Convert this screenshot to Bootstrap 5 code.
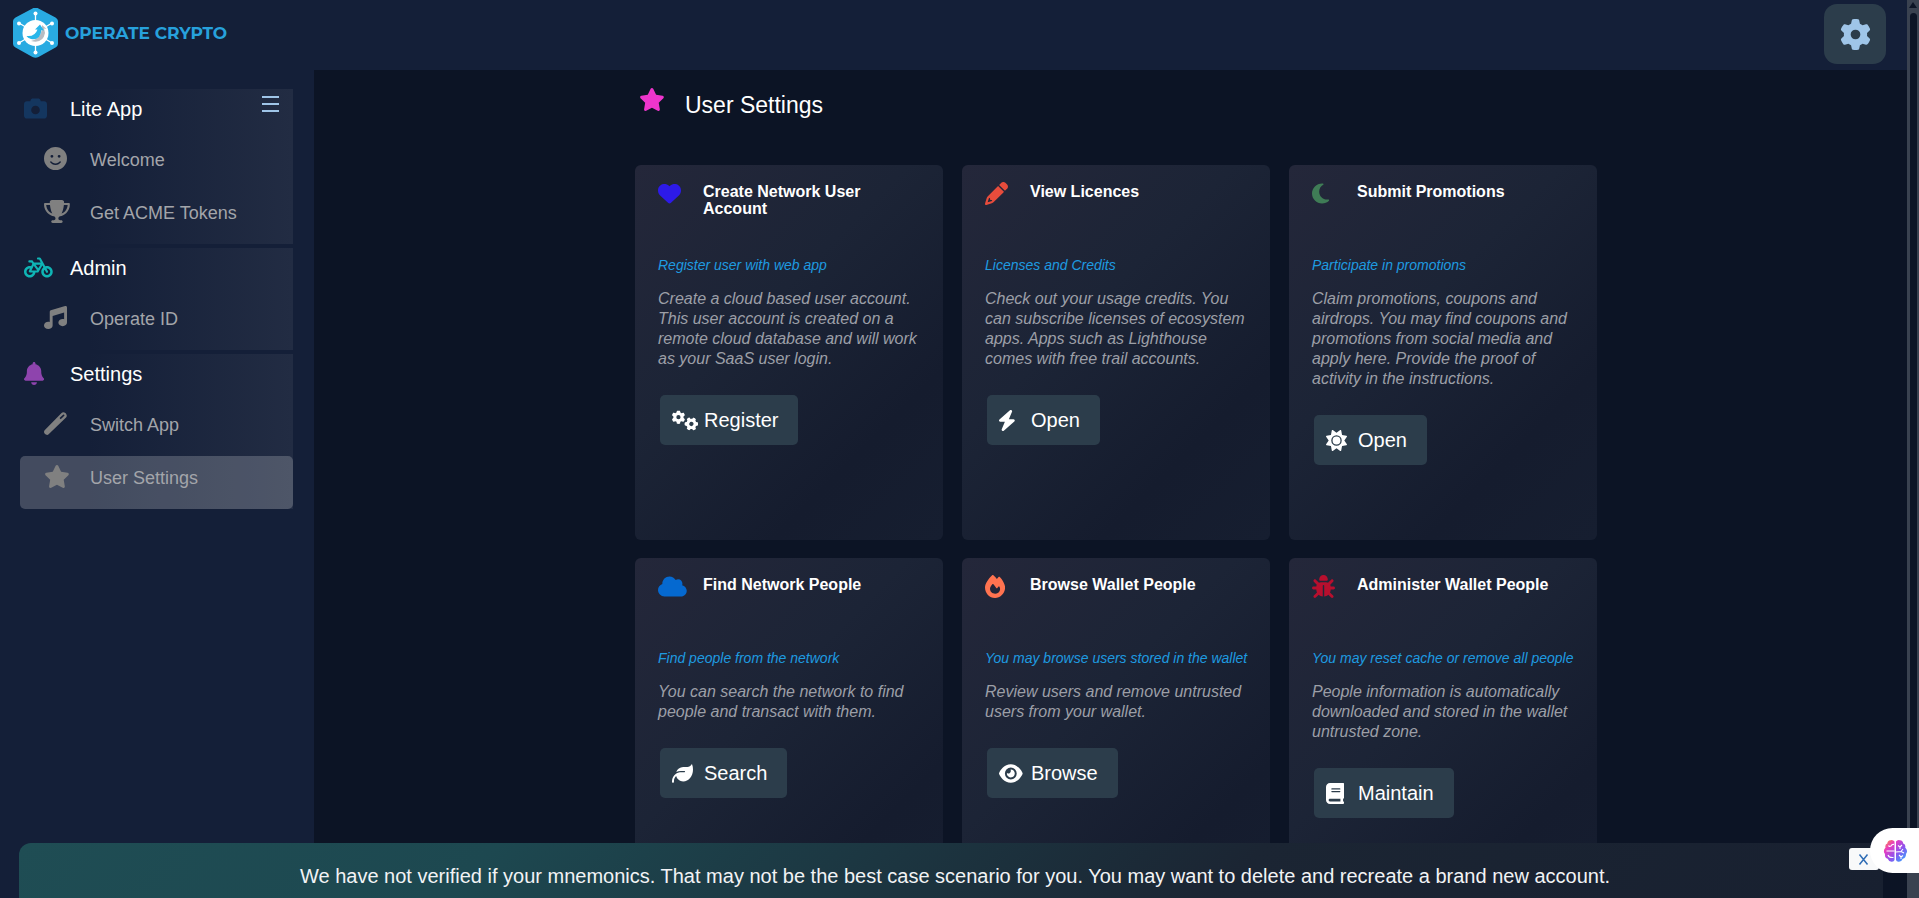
<!DOCTYPE html>
<html lang="en">
<head>
<meta charset="utf-8">
<meta name="viewport" content="width=device-width, initial-scale=1">
<title>Operate Crypto – User Settings</title>
<link href="https://cdn.jsdelivr.net/npm/bootstrap@5.3.0/dist/css/bootstrap.min.css" rel="stylesheet">
<style>
body{font-family:"Liberation Sans",Arial,sans-serif;background:#0c1425;color:#fff;line-height:1.2}
svg{display:block;fill:currentColor}
a{text-decoration:none;color:inherit}
.topbar{height:70px;background:#141f38;padding:4px 21px 6px 12px}
.brand-text{font-family:Montserrat,Inter,sans-serif;font-weight:700;font-size:17px;color:#27a1dc;padding-left:6px}
.gear-btn{width:62px;height:60px;border-radius:13px;border:0;background:#2c3d4b;color:#9fc5e8}
.side{width:314px;background:#141f38;padding:19px 21px 0 20px}
.group-box{background:linear-gradient(90deg,rgba(33,42,67,0) 25%,#222c43 100%);margin-bottom:4px;position:relative}
.head-row{height:49px;padding:8px 4px 0;font-size:20px}
.item-row{height:53px;padding:9px 24px 0;font-size:18px;line-height:26px;color:#a3a5aa}
.item-row svg{color:#808080}
.head-row .ico{width:46px}
.item-row .ico{width:46px}
.ico svg{height:23px}
.item-row.current{background:rgba(255,255,255,.2);border-radius:5px}
.burger{position:absolute;top:6px;right:13px;padding:0;border:0;background:none;color:#9fc5e8}
.pane{padding:18px 0 0 11px}
.pane-inner{max-width:962px}
.page-title{font-size:23px;line-height:28px;margin:3px 0 0}
.title-row{height:77px;padding-left:4px}
.title-row .ico{width:46px;flex:none;color:#ee35cc}
.tiles{display:grid;grid-template-columns:repeat(3,1fr);gap:18px 19px}
.tile{height:375px;border-radius:6px;background:linear-gradient(135deg,#24273a 0%,#1c2436 40%,#151c2e 75%,#161e30 100%);padding:17px 21px 17px 23px}
.tile-head{height:74px}
.tile-head .ico{width:45px;flex:none}
.tile h2{font-size:16px;font-weight:700;line-height:17px;margin:1px 0 0}
.tile .sub{font-size:14px;line-height:18px;font-style:italic;color:#1e9be0;margin:0 -15px 15px 0;white-space:nowrap}
.tile .desc{font-size:16px;line-height:20px;font-style:italic;color:#9c9fa7;margin:0 0 26px}
.act{height:50px;border:0;border-radius:5px;background:#2c3d4b;color:#fff;font-size:20px;padding:0 20px 0 12px;margin-left:2px}
.act .bi-slot{width:32px}
.act svg{height:21px}
.notice{left:19px;right:36px;bottom:0;height:55px;border-radius:12px 12px 0 0;font-size:20px;line-height:24px;padding:21px 0 0 8px;background:linear-gradient(135deg,#1f4d54 0%,#1d4850 25%,#1b2533 65%,#182030 100%);color:#f2f3f5}
.close-btn{right:40px;bottom:28px;width:30px;height:22px;border:0;border-radius:3px;background:#f8f9fa;color:#2f6db5;padding:0 2px 0 0}
.pill{right:0;bottom:25px;width:49px;height:45px;border-radius:23px 0 0 23px;background:#fff;border:0;padding:0 0 0 13px}
.scroller{width:12px;background:#3a4250;padding:13px 2px 25px 3px}
.scroller i{display:block;height:100%;border-radius:4px;background:#0d1526}
.scroller b{top:2px;left:2px;border:4px solid transparent;border-top:0;border-bottom:6px solid #0d1526}
</style>
</head>
<body class="vh-100 overflow-hidden d-flex">
<svg class="d-none" aria-hidden="true">
<symbol id="star" viewBox="0 0 576 512"><path d="M316.9 18C311.6 7 300.4 0 288.1 0s-23.4 7-28.8 18L195 150.3 51.4 171.5c-12 1.8-22 10.2-25.7 21.7s-.7 24.2 7.9 32.7L137.8 329 113.2 474.7c-2 12 3 24.2 12.9 31.3s23 8 33.8 2.3l128.3-68.5 128.3 68.5c10.8 5.7 23.9 4.9 33.8-2.3s14.9-19.3 12.9-31.3L438.5 329 542.7 225.9c8.6-8.5 11.7-21.2 7.9-32.7s-13.7-19.9-25.7-21.7L381.2 150.3 316.9 18z"/></symbol>
<symbol id="gear" viewBox="0 0 512 512"><path d="M495.9 166.6c3.2 8.7 .5 18.4-6.4 24.6l-43.3 39.4c1.1 8.3 1.7 16.8 1.7 25.4s-.6 17.1-1.7 25.4l43.3 39.4c6.9 6.2 9.6 15.9 6.4 24.6c-4.4 11.9-9.7 23.3-15.8 34.3l-4.7 8.1c-6.6 11-14 21.4-22.1 31.2c-5.9 7.2-15.7 9.6-24.5 6.8l-55.7-17.7c-13.4 10.3-28.2 18.9-44 25.4l-12.5 57.1c-2 9.1-9 16.3-18.2 17.8c-13.8 2.3-28 3.5-42.5 3.5s-28.7-1.2-42.5-3.5c-9.2-1.5-16.2-8.7-18.2-17.8l-12.5-57.1c-15.8-6.5-30.6-15.1-44-25.4L83.1 425.9c-8.8 2.8-18.6 .3-24.5-6.8c-8.1-9.8-15.5-20.2-22.1-31.2l-4.7-8.1c-6.1-11-11.4-22.4-15.8-34.3c-3.2-8.7-.5-18.4 6.4-24.6l43.3-39.4C64.6 273.1 64 264.6 64 256s.6-17.1 1.7-25.4L22.4 191.2c-6.9-6.2-9.6-15.9-6.4-24.6c4.4-11.9 9.7-23.3 15.8-34.3l4.7-8.1c6.6-11 14-21.4 22.1-31.2c5.9-7.2 15.7-9.6 24.5-6.8l55.7 17.7c13.4-10.3 28.2-18.9 44-25.4l12.5-57.1c2-9.1 9-16.3 18.2-17.8C227.3 1.2 241.5 0 256 0s28.7 1.2 42.5 3.5c9.2 1.5 16.2 8.7 18.2 17.8l12.5 57.1c15.8 6.5 30.6 15.1 44 25.4l55.7-17.7c8.8-2.8 18.6-.3 24.5 6.8c8.1 9.8 15.5 20.2 22.1 31.2l4.7 8.1c6.1 11 11.4 22.4 15.8 34.3zM256 336a80 80 0 1 0 0-160 80 80 0 1 0 0 160z"/></symbol>
</svg>

<div class="d-flex flex-column flex-grow-1">
<header class="topbar d-flex justify-content-between align-items-start">
  <a href="#" class="d-flex align-items-center mt-1">
    <svg width="47" height="50" viewBox="0 0 47 50" aria-hidden="true">
      <path d="M23.500 0.500Q25 .5 26.500 1.500L43.500 10.500Q46 12 46 14V37Q46 39 43.500 40.500L26.500 50Q23.500 51.500 20.500 50L3.500 40.500Q1 39 1 37V14Q1 12 3.500 10.500L20.500 1.500Q22 .5 23.500 .5Z" fill="#29abe2" transform="translate(0,-1)"/>
      <g stroke="#fff" stroke-width="1.300"><path d="M23.500 5V45M7 15 40 35M40 15 7 35"/></g>
      <g fill="#fff"><circle cx="23.500" cy="5.500" r="2"/><circle cx="23.500" cy="44.500" r="2"/><circle cx="7" cy="15.500" r="2"/><circle cx="40" cy="15.500" r="2"/><circle cx="7" cy="35" r="2"/><circle cx="40" cy="35" r="2"/><circle cx="23.500" cy="25" r="13"/></g>
      <path d="M19 33Q31 36 33 25L32 20.500 34.500 21 30 17Q31 28 22 32Z" fill="#b9bcc2"/>
      <path d="M14.500 28Q23 29 25.500 21.500L23 21.500 28 16.500 32 22.500 29.500 22Q28 33 19 31Q15.500 30 14.500 28Z" fill="#29b6ea"/>
    </svg>
    <span class="brand-text">OPERATE CRYPTO</span>
  </a>
  <button class="gear-btn d-flex align-items-center justify-content-center" type="button" aria-label="Settings"><svg width="31" height="31"><use href="#gear"/></svg></button>
</header>

<div class="d-flex flex-grow-1">
<nav class="side">
  <section class="group-box">
    <button class="burger" type="button" aria-label="Toggle menu"><svg width="19" height="18" viewBox="0 0 19 18"><path d="M1 1h17v2H1zM1 8h17v2H1zM1 15h17v2H1z"/></svg></button>
    <a href="#" class="head-row d-flex"><span class="ico" style="color:#14365f"><svg viewBox="0 0 512 512"><path d="M149.100 64.800L138.700 96H64C28.700 96 0 124.700 0 160V416c0 35.300 28.700 64 64 64H448c35.300 0 64-28.700 64-64V160c0-35.300-28.700-64-64-64H373.300L362.900 64.800C356.400 45.200 338.100 32 317.400 32H194.600c-20.700 0-39 13.200-45.500 32.800zM256 192a96 96 0 1 1 0 192 96 96 0 1 1 0-192z"/></svg></span><span>Lite App</span></a>
    <a href="#" class="item-row d-flex"><span class="ico"><svg viewBox="0 0 512 512"><path d="M256 512A256 256 0 1 0 256 0a256 256 0 1 0 0 512zM164.100 325.500C182 346.200 212.600 368 256 368s74-21.800 91.900-42.500c5.800-6.700 15.900-7.400 22.600-1.600s7.400 15.900 1.600 22.600C349.800 372.100 311.100 400 256 400s-93.800-27.900-116.100-53.500c-5.800-6.700-5.100-16.800 1.600-22.600s16.800-5.100 22.600 1.600zM144.400 208a32 32 0 1 1 64 0 32 32 0 1 1 -64 0zm192-32a32 32 0 1 1 0 64 32 32 0 1 1 0-64z"/></svg></span><span>Welcome</span></a>
    <a href="#" class="item-row d-flex"><span class="ico"><svg viewBox="0 0 576 512"><path d="M400 0H176c-26.500 0-48.100 21.800-47.100 48.200c.2 5.300 .4 10.600 .7 15.800H24C10.700 64 0 74.700 0 88c0 92.600 33.500 157 78.500 200.700c44.300 43.100 98.300 64.800 138.100 75.800c23.400 6.500 39.400 26 39.400 45.600c0 20.900-17 37.900-37.900 37.900H192c-17.700 0-32 14.300-32 32s14.300 32 32 32H384c17.700 0 32-14.300 32-32s-14.300-32-32-32H357.900C337 448 320 431 320 410.100c0-19.600 15.900-39.200 39.400-45.600c39.900-11 93.900-32.700 138.200-75.800C542.500 245 576 180.600 576 88c0-13.300-10.700-24-24-24H446.400c.3-5.200 .5-10.400 .7-15.800C448.100 21.800 426.500 0 400 0zM48.900 112h84.400c9.100 90.100 29.200 150.300 51.900 190.600c-24.900-11-50.800-26.500-73.200-48.300c-32-31.100-58-76-63-142.300zM464.100 254.300c-22.400 21.800-48.300 37.300-73.200 48.300c22.700-40.300 42.800-100.500 51.900-190.600h84.400c-5.100 66.300-31.100 111.200-63 142.300z"/></svg></span><span>Get ACME Tokens</span></a>
  </section>
  <section class="group-box">
    <a href="#" class="head-row d-flex"><span class="ico" style="color:#0fb5b5"><svg viewBox="0 0 640 512"><path d="M312 32c-13.300 0-24 10.700-24 24s10.700 24 24 24h25.700l34.600 64H222.900l-27.400-38C191 99.700 183.700 96 176 96H120c-13.300 0-24 10.700-24 24s10.700 24 24 24h43.700l22.100 30.700-26.600 53.100c-10-2.500-20.500-3.800-31.200-3.800C57.300 224 0 281.300 0 352s57.300 128 128 128c65.300 0 119.100-48.900 127-112h49c8.500 0 16.300-4.500 20.700-11.800l84.800-143.500 21.700 40.100C402.400 276.300 384 312 384 352c0 70.700 57.300 128 128 128s128-57.300 128-128s-57.300-128-128-128c-13.500 0-26.500 2.100-38.700 6L375.400 48.800C369.800 38.400 359 32 347.200 32H312zM458.600 303.700l32.300 59.700c6.300 11.700 20.900 16 32.500 9.700s16-20.900 9.700-32.500l-32.300-59.700c3.600-.6 7.400-.9 11.200-.9c39.800 0 72 32.200 72 72s-32.200 72-72 72s-72-32.200-72-72c0-18.600 7-35.500 18.600-48.300zM133.200 368h65c-7.300 32.100-36 56-70.200 56c-39.800 0-72-32.200-72-72s32.200-72 72-72c1.700 0 3.400 .1 5.100 .2l-24.200 48.500c-9 18.100 4.100 39.400 24.300 39.400zm33.700-48l50.700-101.300 72.900 101.200-.1 .1H166.800zm90.600-128H365.900L317 274.800 257.400 192z"/></svg></span><span>Admin</span></a>
    <a href="#" class="item-row d-flex"><span class="ico"><svg viewBox="0 0 512 512"><path d="M499.100 6.300c8.100 6 12.900 15.600 12.900 25.700v72V368c0 44.200-43 80-96 80s-96-35.800-96-80s43-80 96-80c11.200 0 22 1.600 32 4.600V147L192 223.800V432c0 44.200-43 80-96 80s-96-35.800-96-80s43-80 96-80c11.200 0 22 1.600 32 4.600V200 128c0-14.100 9.300-26.600 22.800-30.700l320-96c9.700-2.900 20.200-1.100 28.300 5z"/></svg></span><span>Operate ID</span></a>
  </section>
  <section class="group-box">
    <a href="#" class="head-row d-flex"><span class="ico" style="color:#8e44ad"><svg viewBox="0 0 448 512"><path d="M224 0c-17.700 0-32 14.300-32 32V51.200C119 66 64 130.600 64 208v18.800c0 47-17.300 92.400-48.500 127.600l-7.400 8.300c-8.400 9.400-10.400 22.900-5.300 34.400S19.400 416 32 416H416c12.600 0 24-7.400 29.200-18.900s3.100-25-5.300-34.400l-7.400-8.300C401.300 319.200 384 273.900 384 226.800V208c0-77.400-55-142-128-156.800V32c0-17.700-14.300-32-32-32zm45.300 493.300c12-12 18.700-28.300 18.700-45.300H224 160c0 17 6.700 33.300 18.700 45.300s28.300 18.700 45.300 18.700s33.300-6.700 45.300-18.700z"/></svg></span><span>Settings</span></a>
    <a href="#" class="item-row d-flex"><span class="ico"><svg viewBox="0 0 512 512"><path fill-rule="evenodd" d="M14 409 391 21Q419-7 454 11Q490 24 502 60Q515 95 490 121L103 497Q82 516 56 509Q13 498 2 455Q-3 428 14 409ZM346 135 372 162 452 84Q460 70 448 60Q437 52 425 59Z"/></svg></span><span>Switch App</span></a>
    <a href="#" class="item-row current d-flex" aria-current="page"><span class="ico"><svg viewBox="0 0 576 512"><use href="#star"/></svg></span><span>User Settings</span></a>
  </section>
</nav>

<main class="pane flex-grow-1">
<div class="pane-inner mx-auto">
  <div class="title-row d-flex"><span class="ico"><svg viewBox="0 0 576 512"><use href="#star"/></svg></span><h1 class="page-title">User Settings</h1></div>
  <div class="tiles">
    <article class="tile">
      <div class="tile-head d-flex"><span class="ico" style="color:#2d1ae8"><svg viewBox="0 0 512 512"><path d="M47.600 300.400L228.300 469.100c7.500 7 17.400 10.900 27.700 10.900s20.200-3.900 27.700-10.900L464.400 300.400c30.400-28.300 47.600-68 47.600-109.500v-5.800c0-69.900-50.500-129.500-119.400-141C347 36.500 300.600 51.400 268 84L256 96 244 84c-32.600-32.600-79-47.500-124.600-39.900C50.500 55.600 0 115.200 0 185.100v5.800c0 41.500 17.200 81.200 47.600 109.500z"/></svg></span><h2>Create Network User Account</h2></div>
      <p class="sub">Register user with web app</p>
      <p class="desc">Create a cloud based user account. This user account is created on a remote cloud database and will work as your SaaS user login.</p>
      <button type="button" class="act d-flex align-items-center"><span class="bi-slot"><svg viewBox="0 0 640 512"><use href="#gear" x="-8" y="10" width="330" height="330"/><use href="#gear" x="0" y="0" width="330" height="330" transform="translate(472 340) rotate(30) translate(-165 -165)"/></svg></span>Register</button>
    </article>
    <article class="tile">
      <div class="tile-head d-flex"><span class="ico" style="color:#e74c3c"><svg viewBox="0 0 512 512"><path d="M410.300 231l11.300-11.300-33.900-33.900-62.100-62.100L291.700 89.800l-11.300 11.300-22.600 22.600L58.600 322.900c-10.400 10.400-18 23.300-22.200 37.400L1 480.700c-2.500 8.400-.2 17.500 6.100 23.700s15.300 8.500 23.700 6.100l120.300-35.400c14.100-4.200 27-11.800 37.400-22.200L387.700 253.700 410.300 231zM160 399.400l-9.100 22.700c-4 3.100-8.500 5.400-13.300 6.900L59.400 452l23-78.100c1.400-4.900 3.800-9.400 6.900-13.300l22.700-9.100v32c0 8.800 7.200 16 16 16h32zM362.700 18.700L348.300 33.200 325.700 55.800 314.300 67.100l33.900 33.900 62.100 62.100 33.900 33.900 11.300-11.300 22.600-22.600 14.500-14.500c25-25 25-65.500 0-90.500L453.300 18.700c-25-25-65.500-25-90.500 0z"/></svg></span><h2>View Licences</h2></div>
      <p class="sub">Licenses and Credits</p>
      <p class="desc">Check out your usage credits. You can subscribe licenses of ecosystem apps. Apps such as Lighthouse comes with free trail accounts.</p>
      <button type="button" class="act d-flex align-items-center"><span class="bi-slot"><svg viewBox="32 0 448 512"><path d="M349.400 44.600c5.900-13.700 1.500-29.700-10.600-38.500s-28.600-8-39.900 1.800l-256 224c-10 8.800-13.600 22.900-8.900 35.300S50.700 288 64 288H175.500L98.600 467.400c-5.900 13.700-1.500 29.700 10.600 38.500s28.600 8 39.900-1.800l256-224c10-8.800 13.600-22.900 8.900-35.300s-16.600-20.700-30-20.700H272.500L349.400 44.600z"/></svg></span>Open</button>
    </article>
    <article class="tile">
      <div class="tile-head d-flex"><span class="ico" style="color:#3f7c56"><svg viewBox="0 0 384 512"><path d="M223.500 32C100 32 0 132.300 0 256S100 480 223.500 480c60.600 0 115.500-24.200 155.800-63.400c5-4.900 6.300-12.500 3.100-18.700s-10.100-9.700-17-8.500c-9.800 1.700-19.800 2.600-30.100 2.600c-96.900 0-175.500-78.800-175.500-176c0-65.800 36-123.100 89.300-153.300c6.100-3.500 9.200-10.500 7.700-17.300s-7.300-11.900-14.300-12.500c-6.300-.5-12.600-.8-19-.8z"/></svg></span><h2>Submit Promotions</h2></div>
      <p class="sub">Participate in promotions</p>
      <p class="desc">Claim promotions, coupons and airdrops. You may find coupons and promotions from social media and apply here. Provide the proof of activity in the instructions.</p>
      <button type="button" class="act d-flex align-items-center"><span class="bi-slot"><svg viewBox="0 0 512 512"><path d="M361.500 1.200c5 2.100 8.600 6.600 9.600 11.900L391 121l107.900 19.800c5.300 1 9.800 4.600 11.900 9.600s1.500 10.700-1.600 15.200L446.900 256l62.300 90.300c3.100 4.500 3.700 10.200 1.600 15.200s-6.600 8.600-11.900 9.600L391 391 371.100 498.900c-1 5.300-4.600 9.800-9.600 11.900s-10.700 1.500-15.200-1.600L256 446.900l-90.300 62.300c-4.500 3.100-10.200 3.700-15.200 1.600s-8.600-6.600-9.600-11.900L121 391 13.100 371.100c-5.300-1-9.800-4.600-11.900-9.600s-1.500-10.700 1.600-15.200L65.100 256 2.800 165.700c-3.100-4.500-3.700-10.200-1.600-15.200s6.600-8.600 11.900-9.600L121 121 140.900 13.100c1-5.300 4.600-9.800 9.600-11.900s10.700-1.500 15.200 1.600L256 65.100 346.300 2.800c4.500-3.100 10.200-3.700 15.200-1.600zM160 256a96 96 0 1 1 192 0 96 96 0 1 1 -192 0zm224 0a128 128 0 1 0 -256 0 128 128 0 1 0 256 0z"/></svg></span>Open</button>
    </article>
    <article class="tile">
      <div class="tile-head d-flex"><span class="ico" style="color:#0569d0"><svg viewBox="0 0 640 512"><path d="M0 336c0 79.500 64.500 144 144 144H512c70.700 0 128-57.300 128-128c0-61.900-44-113.600-102.400-125.400c4.100-10.700 6.400-22.400 6.400-34.600c0-53-43-96-96-96c-19.700 0-38.100 6-53.300 16.200C367 64.200 315.300 32 256 32C167.600 32 96 103.600 96 192c0 2.700 .1 5.400 .2 8.100C40.200 219.800 0 273.200 0 336z"/></svg></span><h2>Find Network People</h2></div>
      <p class="sub">Find people from the network</p>
      <p class="desc">You can search the network to find people and transact with them.</p>
      <button type="button" class="act d-flex align-items-center"><span class="bi-slot"><svg viewBox="0 0 512 512"><path d="M272 96c-78.600 0-145.100 51.500-167.700 122.500c33.600-17 71.500-26.500 111.700-26.500h88c8.800 0 16 7.200 16 16s-7.200 16-16 16H288 216s0 0 0 0c-16.600 0-32.700 1.900-48.300 5.400c-25.900 5.900-49.900 16.400-71.400 30.700c0 0 0 0 0 0C38.300 298.800 0 364.900 0 440v16c0 13.300 10.700 24 24 24s24-10.700 24-24V440c0-48.700 20.700-92.500 53.800-123.200C121.600 392.300 190.300 448 272 448l1 0c132.100-.7 239-130.900 239-291.400c0-42.600-7.500-83.100-21.100-119.600c-2.600-6.900-12.700-6.600-16.200-.1C455.900 72.100 418.700 96 376 96L272 96z"/></svg></span>Search</button>
    </article>
    <article class="tile">
      <div class="tile-head d-flex"><span class="ico" style="color:#ff7350"><svg viewBox="0 0 448 512"><path d="M159.300 5.400c7.800-7.300 19.900-7.200 27.700 .1c27.600 25.900 53.500 53.800 77.700 84c11-14.400 23.500-30.100 37-42.900c7.900-7.400 20.100-7.400 28 .1c34.600 33 63.900 76.600 84.500 118c20.300 40.800 33.800 82.500 33.800 111.900C448 404.200 348.200 512 224 512C98.400 512 0 404.100 0 276.500c0-38.400 17.800-85.300 45.400-131.700C73.300 97.700 112.700 48.600 159.300 5.400zM225.700 416c25.300 0 47.700-7 68.800-21c42.100-29.400 53.400-88.200 28.100-134.400c-4.500-9-16-9.600-22.500-2l-25.200 29.300c-6.600 7.600-18.500 7.400-24.700-.5c-16.500-21-46-58.500-62.800-79.800c-6.300-8-18.300-8.100-24.700-.1c-33.800 42.500-50.800 69.300-50.800 99.400C112 375.400 162.600 416 225.700 416z"/></svg></span><h2>Browse Wallet People</h2></div>
      <p class="sub">You may browse users stored in the wallet</p>
      <p class="desc">Review users and remove untrusted users from your wallet.</p>
      <button type="button" class="act d-flex align-items-center"><span class="bi-slot"><svg viewBox="0 0 576 512"><path d="M288 32c-80.800 0-145.500 36.800-192.600 80.600C48.600 156 17.300 208 2.500 243.700c-3.300 7.900-3.300 16.700 0 24.600C17.300 304 48.600 356 95.400 399.400C142.500 443.200 207.200 480 288 480s145.500-36.800 192.600-80.600c46.800-43.500 78.100-95.400 93-131.100c3.300-7.900 3.300-16.700 0-24.600c-14.900-35.700-46.200-87.700-93-131.100C433.500 68.800 368.800 32 288 32zM144 256a144 144 0 1 1 288 0 144 144 0 1 1 -288 0zm144-64c0 35.300-28.700 64-64 64c-7.100 0-13.900-1.200-20.300-3.300c-5.500-1.800-11.900 1.600-11.700 7.400c.3 6.900 1.300 13.800 3.200 20.700c13.700 51.200 66.400 81.600 117.600 67.900s81.600-66.400 67.900-117.600c-11.100-41.500-47.800-69.400-88.600-71.100c-5.800-.2-9.200 6.100-7.400 11.700c2.100 6.400 3.300 13.200 3.300 20.300z"/></svg></span>Browse</button>
    </article>
    <article class="tile">
      <div class="tile-head d-flex"><span class="ico" style="color:#b80f2e"><svg viewBox="0 0 512 512"><path d="M256 0c53 0 96 43 96 96v3.600c0 15.700-12.700 28.400-28.400 28.400H188.400c-15.700 0-28.400-12.700-28.400-28.400V96c0-53 43-96 96-96zM41.400 105.400c12.500-12.500 32.800-12.500 45.300 0l64 64c.7 .7 1.300 1.400 1.900 2.100c14.200-7.300 30.400-11.400 47.500-11.400H312c17.100 0 33.200 4.100 47.500 11.400c.6-.7 1.200-1.400 1.900-2.100l64-64c12.500-12.500 32.800-12.500 45.300 0s12.500 32.800 0 45.300l-64 64c-.7 .7-1.400 1.300-2.100 1.900c6.200 12 10.100 25.300 11.100 39.500H480c17.700 0 32 14.300 32 32s-14.300 32-32 32H416c0 24.600-5.500 47.800-15.400 68.600c2.200 1.300 4.200 2.900 6 4.800l64 64c12.500 12.500 12.500 32.800 0 45.300s-32.800 12.500-45.300 0l-63.100-63.100c-24.500 21.800-55.800 36.200-90.300 39.600V240c0-8.800-7.200-16-16-16s-16 7.200-16 16V479.200c-34.500-3.400-65.800-17.800-90.300-39.600L86.600 502.600c-12.500 12.500-32.800 12.500-45.300 0s-12.500-32.800 0-45.300l64-64c1.900-1.900 3.900-3.400 6-4.800C101.500 367.800 96 344.600 96 320H32c-17.700 0-32-14.300-32-32s14.300-32 32-32H96.300c1.100-14.100 5-27.500 11.100-39.500c-.7-.6-1.400-1.200-2.100-1.900l-64-64c-12.500-12.500-12.500-32.800 0-45.300z"/></svg></span><h2>Administer Wallet People</h2></div>
      <p class="sub">You may reset cache or remove all people</p>
      <p class="desc">People information is automatically downloaded and stored in the wallet untrusted zone.</p>
      <button type="button" class="act d-flex align-items-center"><span class="bi-slot"><svg viewBox="0 0 448 512"><path d="M96 0C43 0 0 43 0 96V416c0 53 43 96 96 96H384h32c17.700 0 32-14.300 32-32s-14.300-32-32-32V384c17.700 0 32-14.300 32-32V32c0-17.700-14.300-32-32-32H384 96zm0 384H352v64H96c-17.700 0-32-14.300-32-32s14.300-32 32-32zm32-240c0-8.800 7.200-16 16-16H336c8.800 0 16 7.200 16 16s-7.200 16-16 16H144c-8.800 0-16-7.200-16-16zm16 48H336c8.800 0 16 7.200 16 16s-7.200 16-16 16H144c-8.800 0-16-7.200-16-16s7.200-16 16-16z"/></svg></span>Maintain</button>
    </article>
  </div>
</div>
</main>
</div>
</div>

<div class="scroller flex-shrink-0 position-relative" aria-hidden="true"><b class="position-absolute"></b><i></i></div>

<div class="notice position-fixed text-center" role="alert">We have not verified if your mnemonics. That may not be the best case scenario for you. You may want to delete and recreate a brand new account.</div>
<button type="button" class="close-btn position-fixed d-flex align-items-center justify-content-center" aria-label="Close"><svg width="11" height="11" viewBox="0 0 11 11" fill="none" stroke="currentColor" stroke-width="1.500"><path d="M1.500 .5 9.500 10.500M9.500 .5 1.500 10.500"/></svg></button>
<button type="button" class="pill position-fixed d-flex align-items-center" aria-label="Assistant">
  <svg width="25" height="24" viewBox="0 0 25 24"><defs><linearGradient id="bg" x1="0" y1="0" x2="1" y2="1"><stop offset="0" stop-color="#ff9a2e"/><stop offset=".28" stop-color="#e83bc0"/><stop offset=".6" stop-color="#8a55f0"/><stop offset="1" stop-color="#28b4ff"/></linearGradient></defs>
  <path fill="url(#bg)" d="M11.500 2.500Q10 .3 7.500 1.200Q4.500 1.500 4.300 4.500Q1.700 5.500 2.500 8.500Q-.5 12 2 15Q1.500 19 4.700 19.700Q6 23 9 22.700Q11 22.700 11.500 21ZM13 2.500Q14.500 .3 17 1.200Q20 1.500 20.200 4.500Q23 5.500 22.200 8.500Q25.500 12 23 15Q23 19 19.800 19.700Q18.500 23 15.500 22.700Q13.500 22.700 13 21Z"/>
  <path fill="none" stroke="#fff" stroke-width="1.100" d="M3.500 12H11.500M5.500 6.500Q6 8 8 7Q9 5 11 5.500M5 16Q6 19 10.500 18.500M15 6.500 17 8V10M17 8 19 6M13 13 18 12.500 20 10M18 12.500 21 14M16 16 18 18 20 16.500M18 18V20"/></svg>
</button>
<script src="https://cdn.jsdelivr.net/npm/bootstrap@5.3.0/dist/js/bootstrap.bundle.min.js"></script>
</body>
</html>
